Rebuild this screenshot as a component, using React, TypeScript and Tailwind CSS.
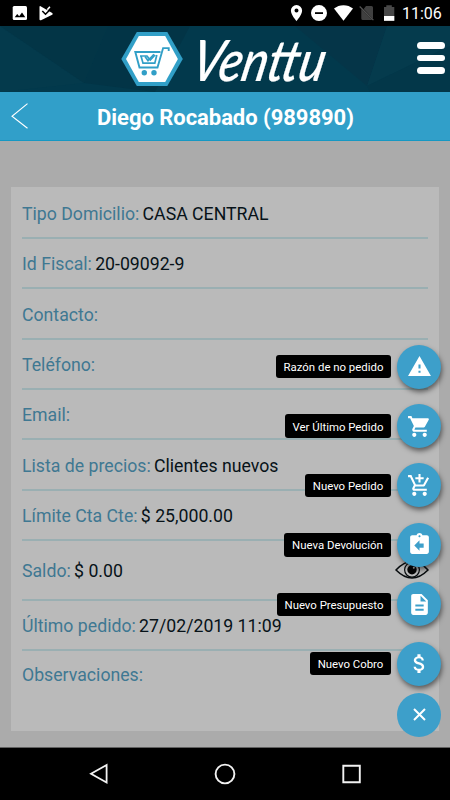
import type { ReactNode } from 'react';

const fields = [
  { label: 'Tipo Domicilio:', value: 'CASA CENTRAL', height: 'h-[50.4px]' },
  { label: 'Id Fiscal:', value: '20-09092-9', height: 'h-[50.4px]' },
  { label: 'Contacto:', value: '', height: 'h-[50.4px]' },
  { label: 'Teléfono:', value: '', height: 'h-[50.4px]' },
  { label: 'Email:', value: '', height: 'h-[50.4px]' },
  { label: 'Lista de precios:', value: 'Clientes nuevos', height: 'h-[50.4px]' },
  { label: 'Límite Cta Cte:', value: '$ 25,000.00', height: 'h-[50.4px]' },
  { label: 'Saldo:', value: '$ 0.00', height: 'h-[59.4px]', eye: true },
  { label: 'Último pedido:', value: '27/02/2019 11:09', height: 'h-[50.4px]' },
];

const actions = [
  { label: 'Razón de no pedido', width: 'w-[115px]', path: 'M1 21h22L12 2 1 21zm12-3h-2v-2h2v2zm0-4h-2v-4h2v4z' },
  { label: 'Ver Último Pedido', width: 'w-[106px]', path: 'M7 18c-1.1 0-1.99.9-1.99 2S5.9 22 7 22s2-.9 2-2-.9-2-2-2zM1 2v2h2l3.6 7.59-1.35 2.45c-.16.28-.25.61-.25.96 0 1.1.9 2 2 2h12v-2H7.42c-.14 0-.25-.11-.25-.25l.03-.12.9-1.63h7.45c.75 0 1.41-.41 1.75-1.03l3.58-6.49A1.003 1.003 0 0 0 20 4H5.21l-.94-2H1zm16 16c-1.1 0-1.99.9-1.99 2s.89 2 1.99 2 2-.9 2-2-.9-2-2-2z' },
  { label: 'Nuevo Pedido', width: 'w-[86px]', path: 'M11 9h2V6h3V4h-3V1h-2v3H8v2h3v3zm-4 9c-1.1 0-1.99.9-1.99 2S5.9 22 7 22s2-.9 2-2-.9-2-2-2zm10 0c-1.1 0-1.99.9-1.99 2s.89 2 1.99 2 2-.9 2-2-.9-2-2-2zm-9.83-3.25l.03-.12.9-1.63h7.45c.75 0 1.41-.41 1.75-1.03l3.86-7.01L19.42 4h-.01l-1.1 2-2.76 5H8.53l-.13-.27L6.16 6l-.95-2-.94-2H1v2h2l3.6 7.59-1.35 2.45c-.16.28-.25.61-.25.96 0 1.1.9 2 2 2h12v-2H7.42c-.13 0-.25-.11-.25-.25z' },
  { label: 'Nueva Devolución', width: 'w-[107px]', path: 'M19 3h-4.18C14.4 1.84 13.3 1 12 1c-1.3 0-2.4.84-2.82 2H5c-1.1 0-2 .9-2 2v14c0 1.1.9 2 2 2h14c1.1 0 2-.9 2-2V5c0-1.1-.9-2-2-2zm-7 0c.55 0 1 .45 1 1s-.45 1-1 1-1-.45-1-1 .45-1 1-1zm4 12h-4v3l-5-5 5-5v3h4v4z' },
  { label: 'Nuevo Presupuesto', width: 'w-[114px]', path: 'M14 2H6c-1.1 0-1.99.9-1.99 2L4 20c0 1.1.89 2 1.99 2H18c1.1 0 2-.9 2-2V8l-6-6zm2 16H8v-2h8v2zm0-4H8v-2h8v2zm-3-5V3.5L18.5 9H13z' },
  { label: 'Nuevo Cobro', width: 'w-[81px]', path: 'M11.8 10.9c-2.27-.59-3-1.2-3-2.15 0-1.09 1.01-1.85 2.7-1.85 1.78 0 2.44.85 2.5 2.1h2.21c-.07-1.72-1.12-3.3-3.21-3.81V3h-3v2.16c-1.94.42-3.5 1.68-3.5 3.61 0 2.31 1.91 3.46 4.7 4.13 2.5.6 3 1.48 3 2.41 0 .69-.49 1.79-2.7 1.79-2.06 0-2.87-.92-2.98-2.1h-2.2c.12 2.19 1.76 3.42 3.68 3.83V21h3v-2.15c1.95-.37 3.5-1.5 3.5-3.55 0-2.84-2.43-3.81-4.7-4.4z' },
];

function StatusBar() {
  return (
    <div className="flex h-[26px] items-center bg-black pl-[12px] pr-[9px]">
      <svg width="42" height="16" viewBox="0 0 42 16">
        <rect x="0.7" y="1" width="14.3" height="14" rx="1.5" fill="#fff" />
        <path d="M2.7 12.3 5.2 9l2 2.2L10 7.6l3.3 4.7z" fill="#000" />
        <path d="M28.6 1.2 40.2 8q1.2.9 0 1.8L29 15.2q-1.5.6-1.5-1V2q0-1.2 1.1-.8z" fill="#fff" />
        <path d="m30.3 6 3.2 3.2 5-5" fill="none" stroke="#000" strokeWidth="1.6" />
        <path d="m35.3 4.8 2.6-3" stroke="#fff" strokeWidth="1.6" />
      </svg>
      <div className="ml-auto flex items-center">
        <svg width="106" height="18" viewBox="290 4 106 18">
          <path fillRule="evenodd" d="M296.5 5a5.6 5.6 0 0 0-5.6 5.6c0 4.2 5.6 10.6 5.6 10.6s5.6-6.4 5.6-10.6A5.6 5.6 0 0 0 296.5 5zm0 3.6a2 2 0 1 1 0 4 2 2 0 0 1 0-4z" fill="#fff" />
          <circle cx="319" cy="13.1" r="8" fill="#fff" />
          <path d="M315 13.1h8" stroke="#000" strokeWidth="1.8" />
          <path d="M334 8.6a15 15 0 0 1 19 0L343.5 20.7z" fill="#fff" />
          <path d="M366 6h5.5q1.5 0 1.5 1.5V19L363.7 9zM361.3 9l11 11H362.5q-1.2 0-1.2-1.4z" fill="#404040" />
          <path d="M359.7 6.5 373.4 20.2" stroke="#555" strokeWidth="1.2" />
          <path d="M384 7h2.3V5.2h5.5V7h2.5v13.8H384z" fill="#484848" />
          <path d="M384 16h10.3v4.8H384z" fill="#fff" />
        </svg>
        <span className="ml-[6px] w-[39px] whitespace-nowrap pt-[1px] text-[16px] leading-[26px] text-white">11:06</span>
      </div>
    </div>
  );
}

function Header() {
  return (
    <header className="relative h-[66px] bg-[#02394c]">
      <svg className="absolute inset-0" width="450" height="66">
        <path d="M0 0 84 57 0 66z" fill="#043a4c" />
        <path d="M108 0 84 57 155 66 190 0z" fill="#023446" />
        <path d="M84 57 0 0h108z" fill="#033546" />
        <path d="M295 0 367 60 387 0z" fill="#053548" />
        <path d="M387 0 367 60 450 20V0z" fill="#053b4d" />
        <path d="M367 60 450 20v46h-80z" fill="#033749" />
      </svg>
      <div className="relative flex h-full items-center">
        <svg className="ml-[121px]" width="63" height="56" viewBox="121 31 63 56">
          <path d="M136.8 32h30.5l15.5 27-15.5 27h-30.5l-15.5-27z" fill="#319fc7" />
          <path d="M138.8 36h26.4l12.7 23-12.7 23h-26.4L126 59z" fill="#fff" />
          <path d="M160.5 52h-25.2l4.2 15.5h18l5.6-19.4h5.6v3" fill="none" stroke="#319fc7" strokeWidth="1.9" />
          <path d="M140 56h7l3.3 4 4.8-5M141 56l2 7.2h11.8l2-8.2" fill="none" stroke="#319fc7" strokeWidth="1.7" />
          <path d="m145 56.5 3 4.1 6-6.2" fill="none" stroke="#319fc7" strokeWidth="1.7" />
          <circle cx="144.3" cy="72.7" r="2.7" fill="#319fc7" />
          <circle cx="154" cy="72.7" r="2.7" fill="#319fc7" />
        </svg>
        <svg className="overflow-visible" width="146" height="66" viewBox="184 26 146 66">
          <text transform="translate(189 80.5) skewX(-12) scale(1 1.24)" textLength="133" lengthAdjust="spacingAndGlyphs" fill="#fff" stroke="#fff" strokeWidth="0.2" strokeLinejoin="round" fontFamily="Lato, sans-serif" fontStyle="italic" fontWeight="500" fontSize="46">Venttu</text>
        </svg>
        <div className="ml-auto mr-[5px] flex w-[28px] flex-col gap-[6px] pb-[2px]">
          <span className="h-[6.5px] rounded-full bg-white" />
          <span className="h-[6.5px] rounded-full bg-white" />
          <span className="h-[6.5px] rounded-full bg-white" />
        </div>
      </div>
    </header>
  );
}

function Eye() {
  return (
    <svg className="-mr-px ml-auto" width="34" height="20" viewBox="0 0 34 20">
      <path d="M1 10Q17-7 33 10 17 26 1 10z" fill="none" stroke="#080c0e" strokeWidth="1.5" />
      <circle cx="17" cy="9.8" r="7.4" fill="none" stroke="#080c0e" strokeWidth="1.2" />
      <circle cx="17" cy="9.8" r="4.7" fill="#050505" />
      <circle cx="18.8" cy="7.8" r="1" fill="#bababa" />
    </svg>
  );
}

function Fab({ children, flat }: { children: ReactNode; flat?: boolean }) {
  return (
    <div className={`flex size-[44px] shrink-0 items-center justify-center rounded-full bg-[#3d9fca] ${flat ? '' : 'shadow-[1px_3px_5px_rgba(0,0,0,0.5)]'}`}>
      {children}
    </div>
  );
}

export default function App() {
  return (
    <div className="relative flex h-[800px] w-[450px] flex-col overflow-hidden bg-[#ababab] font-['Roboto',sans-serif]">
      <StatusBar />
      <Header />
      <div className="flex h-[49px] shrink-0 items-center border-b border-[#1698c3] bg-[#319fc9]">
        <svg className="ml-[11px]" width="18" height="28" viewBox="0 0 18 28">
          <path d="M16.5 1.6 1 14.3l15.5 12" fill="none" stroke="#fff" strokeWidth="1.1" />
        </svg>
        <h1 className="ml-[68px] whitespace-nowrap pt-[3px] text-[22px] font-bold leading-[50px] tracking-[-0.04px] text-white">Diego Rocabado (989890)</h1>
      </div>
      <main className="flex-1 px-[11px] pt-[46px]">
        <section className="h-[544px] bg-[#bababa] px-[11px] pt-[1.5px] text-[17.7px]">
          {fields.map((f) => (
            <div key={f.label} className={`flex items-center border-b-2 border-[#9aafb2] ${f.height}`}>
              <span className="pt-[2.6px] text-[#3f7892]">{f.label}</span>
              <span className="ml-[3.3px] pt-[2.6px] text-[#071218]">{f.value}</span>
              {f.eye && <Eye />}
            </div>
          ))}
          <div className="flex h-[50.4px] items-center pb-[1px] text-[#3f7892]">Observaciones:</div>
        </section>
      </main>
      <nav className="flex h-[53px] items-center justify-center border-t border-[#606060] bg-black">
        <svg width="280" height="30" viewBox="85 759 280 30" fill="none" stroke="#f2f2f2">
          <path d="M106.6 765v17.5L91 773.8z" strokeWidth="1.8" />
          <circle cx="225" cy="774" r="9.4" strokeWidth="1.9" />
          <path d="M343.3 765.8h16.5v16.5h-16.5z" strokeWidth="1.9" />
        </svg>
      </nav>
      <div className="absolute right-[9px] top-[344.7px] flex flex-col items-end">
        {actions.map((a, i) => (
          <div key={a.label} className={`flex items-center ${i === 5 ? 'mb-[7px]' : 'mb-[15.4px]'}`}>
            <span className={`mr-[6px] flex h-[23.5px] items-center justify-center whitespace-nowrap rounded-[3px] bg-black pt-[2px] text-[11.4px] text-white ${a.width}`}>{a.label}</span>
            <Fab>
              <svg width="25" height="25" viewBox="0 0 24 24" fill="#fff"><path d={a.path} /></svg>
            </Fab>
          </div>
        ))}
        <Fab flat>
          <svg width="13" height="13" viewBox="0 0 13 13"><path d="m1 1 11 11M12 1 1 12" stroke="#fff" strokeWidth="2" /></svg>
        </Fab>
      </div>
    </div>
  );
}
